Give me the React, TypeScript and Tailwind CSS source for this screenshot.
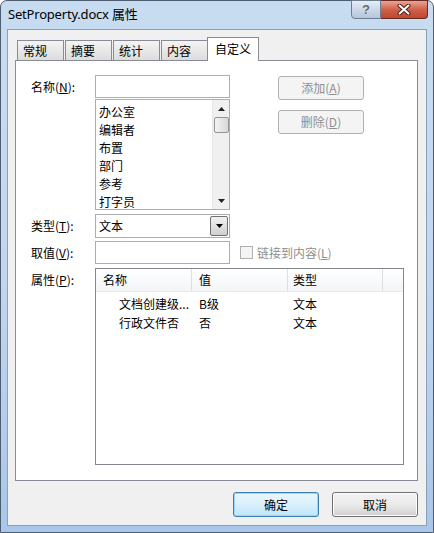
const ui = "font-['Noto_Sans_CJK_SC','Noto_Sans',sans-serif] text-[12px] leading-[16px] text-black";

function Tab({ label }: { label: string }) {
  return (
    <div className="w-[47px] h-[20px] border border-b-0 border-[#898c95] bg-linear-to-b from-[#f4f4f4] to-[#dcdcdc] pl-[5px] pt-[2px]">
      {label}
    </div>
  );
}

function Btn({ children, disabled, primary }: { children: React.ReactNode; disabled?: boolean; primary?: boolean }) {
  if (disabled) {
    return (
      <div className="w-[86px] h-[24px] rounded-[3px] border border-[#adb2b5] bg-[#f4f4f4] flex items-center justify-center text-[#8f8f8f]">
        {children}
      </div>
    );
  }
  return (
    <div
      className={
        "w-[86px] h-[25px] rounded-[3px] border flex items-center justify-center " +
        (primary
          ? "border-[#3c7fb1] bg-linear-to-b from-[#eaf6fd] via-[#d9f0fc] to-[#bee6fd] shadow-[inset_0_0_0_1px_#9fd6f5]"
          : "border-[#707070] bg-linear-to-b from-[#f2f2f2] via-[#ebebeb] to-[#cfcfcf] shadow-[inset_0_0_0_1px_#fcfcfc]")
      }
    >
      {children}
    </div>
  );
}

function Label({ text, k, h }: { text: string; k: string; h: string }) {
  return (
    <div className={"w-[64px] flex items-center " + h}>
      {text}(<u>{k}</u>):
    </div>
  );
}

const names = ["办公室", "编辑者", "布置", "部门", "参考", "打字员"];

export default function App() {
  return (
    <div className={ui + " w-[434px] h-[533px] flex flex-col rounded-t-[7px] border border-[#4e5d6f] bg-linear-to-b from-[#c8dcf1] via-[#c2d7ef] to-[#a9c7ea]"}>
      {/* title bar */}
      <div className="h-[28px] flex justify-between">
        <div className="pl-[7px] pt-[5px] font-['Noto_Sans','Noto_Sans_CJK_SC',sans-serif] text-[13px] leading-[17px] tracking-[-0.2px]">
          SetProperty.docx 属性
        </div>
        <div className="flex h-[19px] mr-[5px] -mt-px">
          <div className="w-[30px] h-[19px] rounded-bl-[4px] border border-[#6e7e92] bg-linear-to-b from-[#e6eef7] via-[#ccd9e8] to-[#b5c7dc] flex items-center justify-center font-['Liberation_Sans',sans-serif] font-bold text-[13px] text-[#5b6673] [text-shadow:0_0_1px_#fff]">
            ?
          </div>
          <div className="w-[47px] h-[19px] rounded-br-[4px] border border-l-0 border-[#6a2a22] bg-linear-to-b from-[#e8a596] via-[#d0604a] to-[#c14630] flex items-center justify-center">
            <svg width="14" height="11" viewBox="0 0 14 11">
              <path d="M2.5 1.5 L11.5 9.5 M11.5 1.5 L2.5 9.5" stroke="#4b1d15" strokeWidth="4" strokeLinecap="round" />
              <path d="M2.5 1.5 L11.5 9.5 M11.5 1.5 L2.5 9.5" stroke="#ffffff" strokeWidth="2" strokeLinecap="round" />
            </svg>
          </div>
        </div>
      </div>

      {/* client area */}
      <div className="mx-[6px] h-[497px] border border-[#8aa0b8] bg-[#f0f0f0] pl-[7px] pr-[8px] pb-[8px] flex flex-col">
        {/* tabs */}
        <div className="flex items-end gap-[1px] pl-[2px] pt-[7px] h-[30px]">
          <Tab label="常规" />
          <Tab label="摘要" />
          <Tab label="统计" />
          <Tab label="内容" />
          <div className="relative z-10 -mb-px -ml-[2px] w-[52px] h-[24px] border border-b-0 border-[#898c95] bg-white pl-[7px] pt-[3px]">
            自定义
          </div>
        </div>

        {/* panel */}
        <div className="w-[403px] h-[421px] border border-[#898c95] bg-white pl-[15px] pt-[14px]">
          <div className="flex">
            <div className="flex flex-col">
              <div className="flex">
                <Label text="名称" k="N" h="h-[23px]" />
                <div className="w-[135px] h-[23px] border border-[#abadb3] bg-white" />
              </div>
              <div className="flex mt-[1px]">
                <div className="w-[64px]" />
                <div className="w-[135px] h-[111px] border border-[#abadb3] bg-white flex">
                  <div className="flex-1 pl-[3px] pt-[3px]">
                    {names.map((n) => (
                      <div key={n} className="h-[18px] leading-[18px]">
                        {n}
                      </div>
                    ))}
                  </div>
                  <div className="w-[17px] bg-[#f0f0f0] border-l border-[#e6e6e6] flex flex-col items-center">
                    <div className="h-[17px] flex items-center justify-center">
                      <svg width="7" height="4" viewBox="0 0 7 4">
                        <path d="M0 4 L3.5 0 L7 4 Z" fill="#222" />
                      </svg>
                    </div>
                    <div className="w-[15px] h-[16px] rounded-[2px] border border-[#959595] bg-linear-to-r from-[#f3f3f3] to-[#d8d8d8]" />
                    <div className="flex-1" />
                    <div className="h-[17px] flex items-center justify-center">
                      <svg width="7" height="4" viewBox="0 0 7 4">
                        <path d="M0 0 L3.5 4 L7 0 Z" fill="#222" />
                      </svg>
                    </div>
                  </div>
                </div>
              </div>
            </div>
            <div className="ml-[48px] pt-[1px] flex flex-col gap-[10px]">
              <Btn disabled>
                添加(<u>A</u>)
              </Btn>
              <Btn disabled>
                删除(<u>D</u>)
              </Btn>
            </div>
          </div>

          {/* type */}
          <div className="flex mt-[4px]">
            <Label text="类型" k="T" h="h-[24px]" />
            <div className="w-[135px] h-[24px] border border-[#abadb3] bg-white flex items-center pl-[3px] pr-px">
              <span className="flex-1">文本</span>
              <div className="w-[18px] h-[20px] border border-[#707070] rounded-[2px] bg-linear-to-b from-[#f2f2f2] to-[#cfcfcf] flex items-center justify-center">
                <svg width="7" height="4" viewBox="0 0 7 4">
                  <path d="M0 0 L3.5 4 L7 0 Z" fill="#000" />
                </svg>
              </div>
            </div>
          </div>

          {/* value */}
          <div className="flex mt-[3px]">
            <Label text="取值" k="V" h="h-[23px]" />
            <div className="w-[135px] h-[23px] border border-[#abadb3] bg-white" />
            <div className="ml-[10px] flex items-center gap-[4px] text-[#8f8f8f]">
              <div className="w-[13px] h-[13px] border border-[#b1b1b1] bg-[#f4f4f4]" />
              <span>
                链接到内容(<u>L</u>)
              </span>
            </div>
          </div>

          {/* properties */}
          <div className="flex mt-[4px]">
            <div className="self-start">
              <Label text="属性" k="P" h="h-[24px]" />
            </div>
            <div className="w-[309px] h-[197px] border border-[#828790] bg-white">
              <div className="flex h-[23px] bg-linear-to-b from-white to-[#f3f4f6] border-b border-[#eaeaea]">
                <div className="w-[96px] border-r border-[#dedfe3] pl-[7px] flex items-center">名称</div>
                <div className="w-[96px] border-r border-[#dedfe3] pl-[7px] flex items-center">值</div>
                <div className="w-[95px] border-r border-[#dedfe3] pl-[5px] flex items-center">类型</div>
                <div className="flex-1" />
              </div>
              <div className="pt-[2px]">
                {[
                  ["文档创建级...", "B级", "文本"],
                  ["行政文件否", "否", "文本"],
                ].map(([a, b, c]) => (
                  <div key={a} className="flex h-[19px] items-center">
                    <div className="w-[96px] pl-[23px]">{a}</div>
                    <div className="w-[96px] pl-[7px]">{b}</div>
                    <div className="w-[95px] pl-[5px]">{c}</div>
                  </div>
                ))}
              </div>
            </div>
          </div>
        </div>

        {/* footer */}
        <div className="mt-[11px] flex justify-end gap-[13px]">
          <Btn primary>确定</Btn>
          <Btn>取消</Btn>
        </div>
      </div>
    </div>
  );
}
